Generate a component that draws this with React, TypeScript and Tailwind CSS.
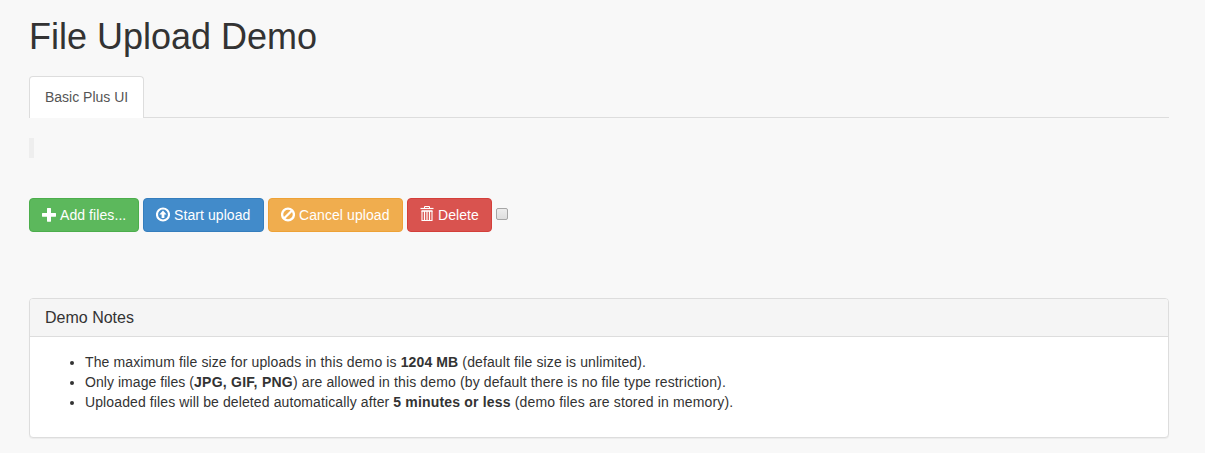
import type { ReactNode } from "react";

function PlusIcon() {
  return (
    <svg width="14" height="14" viewBox="0 0 14 14" fill="currentColor">
      <path d="M5.4 0h3.2q.4 0 .4.4V5h4.6q.4 0 .4.4v2.9q0 .4-.4.4H9v4.6q0 .4-.4.4H5.4q-.4 0-.4-.4V8.7H.4q-.4 0-.4-.4V5.4Q0 5 .4 5H5V.4q0-.4.4-.4z" />
    </svg>
  );
}

function UploadIcon() {
  return (
    <svg className="-mt-px" width="14" height="15" viewBox="0 0 14 15" fill="currentColor">
      <circle cx="7" cy="7.5" r="6" fill="none" stroke="currentColor" strokeWidth="2.1" />
      <path d="M7 3.4l3.6 4.2H8.4v3.5H5.6V7.6H3.4z" />
    </svg>
  );
}

function BanIcon() {
  return (
    <svg className="-mt-px" width="14" height="15" viewBox="0 0 14 15" fill="none" stroke="currentColor" strokeWidth="2.3">
      <circle cx="7" cy="7.5" r="5.9" />
      <path d="M3.2 11.3l7.6-7.6" />
    </svg>
  );
}

function TrashIcon() {
  return (
    <svg className="-mt-0.5" width="14" height="16" viewBox="0 0 14 16" fill="none" stroke="currentColor">
      <path d="M4.5 2V.5h5V2" />
      <path d="M.5 2.5h13" strokeWidth="1.2" />
      <path d="M1.5 5h11" strokeWidth="1.6" />
      <path d="M2 5v10M12 5v10M1.5 14.5h11" strokeWidth="1.1" />
      <path d="M4.5 5v9M7 5v9M9.5 5v9" strokeWidth="1.2" />
    </svg>
  );
}

function Button({ icon, label, className }: { icon: ReactNode; label: string; className: string }) {
  return (
    <button
      type="button"
      className={`flex h-[34px] items-center rounded border pl-3 text-sm leading-5 tracking-[0.08px] whitespace-nowrap text-white ${className}`}
    >
      <span className="mr-1 flex h-4 w-[14px] shrink-0 items-center">{icon}</span>
      {label}
    </button>
  );
}

export default function App() {
  return (
    <div className="h-[453px] overflow-hidden bg-[#f8f8f8] font-['Liberation_Sans',Arial,sans-serif] text-sm leading-5 text-[#333]">
      <main className="ml-[29px] w-[1140px] pt-[17px]">
        <h1 className="h-[59px] text-[36px] leading-10">File Upload Demo</h1>
        <nav className="flex h-[42px] border-b border-[#ddd]">
          <a className="h-[42px] w-[115px] rounded-t border border-b-0 border-[#ddd] bg-white px-[15px] pt-[10px] whitespace-nowrap text-[#555]">
            Basic Plus UI
          </a>
        </nav>
        <blockquote className="mt-5 h-5 border-l-[5px] border-[#eee]" />
        <div className="mt-10 flex items-center gap-1">
          <Button icon={<PlusIcon />} label="Add files..." className="w-[110px] border-[#4cae4c] bg-[#5cb85c]" />
          <Button icon={<UploadIcon />} label="Start upload" className="w-[121px] border-[#357ebd] bg-[#428bca]" />
          <Button icon={<BanIcon />} label="Cancel upload" className="w-[135px] border-[#eea236] bg-[#f0ad4e]" />
          <Button icon={<TrashIcon />} label="Delete" className="w-[85px] border-[#d43f3a] bg-[#d9534f]" />
          <input
            type="checkbox"
            aria-label="Select all files"
            className="-mt-0.5 size-3 appearance-none rounded-[2px] border border-[#a6a6a6] bg-linear-to-b from-[#ededed] to-[#dedede]"
          />
        </div>
        <section className="mt-[66px] h-[140px] overflow-hidden rounded border border-[#ddd] bg-white shadow-[0_1px_1px_rgba(0,0,0,0.05)]">
          <h3 className="h-[38px] border-b border-[#ddd] bg-[#f5f5f5] px-[15px] pt-[10px] text-base leading-[18px]">
            Demo Notes
          </h3>
          <ul className="list-disc pt-[15px] pl-[55px]">
            <li className="tracking-[0.12px]">
              The maximum file size for uploads in this demo is <strong>1204 MB</strong> (default file size is unlimited).
            </li>
            <li className="tracking-[0.13px]">
              <span className="tracking-[0.05px]">Only image files (</span>
              <strong className="tracking-[0.25px]">JPG, GIF, PNG</strong>) are allowed in this demo (by default there is no
              file type restriction).
            </li>
            <li className="tracking-[0.11px]">
              Uploaded files will be deleted automatically after{" "}
              <strong className="tracking-[0.17px]">5 minutes or less</strong>
              <span className="tracking-[0.16px]"> (demo files are stored in memory).</span>
            </li>
          </ul>
        </section>
      </main>
    </div>
  );
}
